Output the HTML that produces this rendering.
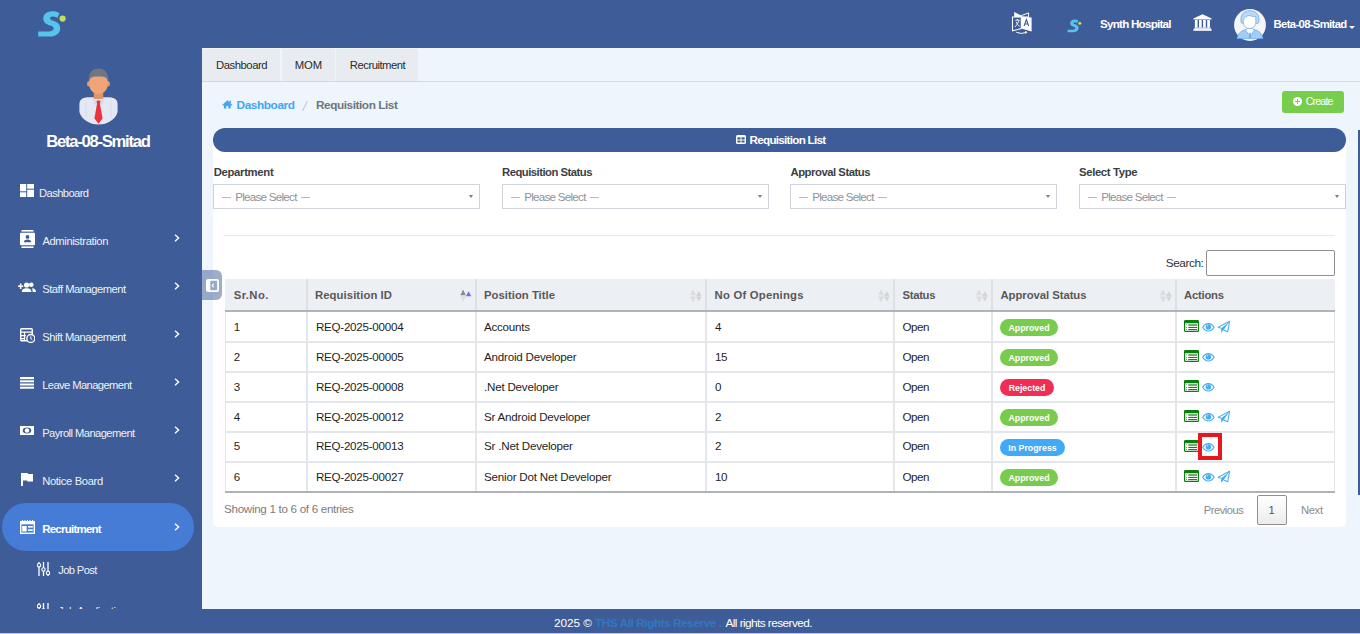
<!DOCTYPE html>
<html><head><meta charset="utf-8"><title>Requisition List</title>
<style>
*{box-sizing:border-box;margin:0;padding:0}
html,body{width:1360px;height:634px;overflow:hidden;background:#eef5fd;font-family:"Liberation Sans", sans-serif;color:#212529}
.a{position:absolute}
.t{position:absolute;white-space:nowrap;line-height:1}
</style></head>
<body>
<div class="a" style="left:0px;top:0px;width:1360px;height:48px;background:#3e5c97;"></div>
<div class="a" style="left:0px;top:48px;width:202px;height:561px;background:#3e5c97;"></div>
<div class="a" style="left:0px;top:609px;width:1360px;height:24px;background:#3e5c97;"></div>
<div class="a" style="left:0px;top:633px;width:1360px;height:1px;background:#c8c8bc;"></div>
<div class="a" style="left:202px;top:48px;width:1158px;height:561px;background:#eef5fd;"></div>
<div class="a" style="left:202px;top:48px;width:1158px;height:33px;background:#eef5fd;"></div>
<div class="a" style="left:202px;top:49px;width:78px;height:32px;background:#e8ecf0;"></div>
<div class="a" style="left:282px;top:49px;width:53px;height:32px;background:#e8ecf0;"></div>
<div class="a" style="left:336px;top:49px;width:82px;height:32px;background:#e8ecf0;"></div>
<div class="a" style="left:202px;top:81px;width:1158px;height:1px;background:#d6d9dc;"></div>
<div class="a" style="left:1282px;top:91px;width:62px;height:22px;background:#78cd4c;border-radius:3px"></div>
<div class="a" style="left:213px;top:140px;width:1133px;height:387px;background:#ffffff;border-radius:0 0 5px 5px"></div>
<div class="a" style="left:213px;top:128px;width:1133px;height:24px;background:#3e5c97;border-radius:12px"></div>
<div class="a" style="left:213px;top:184px;width:267px;height:25px;background:#fff;border:1px solid #cfd3da"></div>
<div class="a" style="left:221.8px;top:197.1px;width:9px;height:1px;background:#b5b9bf;"></div>
<div class="a" style="left:300.5px;top:197.1px;width:9.3px;height:1px;background:#b5b9bf;"></div>
<div class="a" style="left:469px;top:195px;width:0;height:0;border-left:2.5px solid transparent;border-right:2.5px solid transparent;border-top:3px solid #7a7a7a"></div>
<div class="a" style="left:502px;top:184px;width:267px;height:25px;background:#fff;border:1px solid #cfd3da"></div>
<div class="a" style="left:510.8px;top:197.1px;width:9px;height:1px;background:#b5b9bf;"></div>
<div class="a" style="left:589.5px;top:197.1px;width:9.3px;height:1px;background:#b5b9bf;"></div>
<div class="a" style="left:758px;top:195px;width:0;height:0;border-left:2.5px solid transparent;border-right:2.5px solid transparent;border-top:3px solid #7a7a7a"></div>
<div class="a" style="left:790px;top:184px;width:267px;height:25px;background:#fff;border:1px solid #cfd3da"></div>
<div class="a" style="left:798.8px;top:197.1px;width:9px;height:1px;background:#b5b9bf;"></div>
<div class="a" style="left:877.5px;top:197.1px;width:9.3px;height:1px;background:#b5b9bf;"></div>
<div class="a" style="left:1046px;top:195px;width:0;height:0;border-left:2.5px solid transparent;border-right:2.5px solid transparent;border-top:3px solid #7a7a7a"></div>
<div class="a" style="left:1079px;top:184px;width:267px;height:25px;background:#fff;border:1px solid #cfd3da"></div>
<div class="a" style="left:1087.8px;top:197.1px;width:9px;height:1px;background:#b5b9bf;"></div>
<div class="a" style="left:1166.5px;top:197.1px;width:9.3px;height:1px;background:#b5b9bf;"></div>
<div class="a" style="left:1335px;top:195px;width:0;height:0;border-left:2.5px solid transparent;border-right:2.5px solid transparent;border-top:3px solid #7a7a7a"></div>
<div class="a" style="left:224px;top:235px;width:1111px;height:1px;background:#e6e8eb;"></div>
<div class="a" style="left:1206px;top:250px;width:129px;height:26px;background:#fff;border:1px solid #8e8e8e;border-radius:2px"></div>
<div class="a" style="left:202px;top:270px;width:20px;height:30px;background:rgba(62,92,151,0.5);border-radius:0 6px 6px 0"></div>
<div class="a" style="left:206px;top:279px;line-height:0"><svg width="13" height="13" viewBox="0 0 13 13"><rect x="0" y="0" width="13" height="13" rx="2.2" fill="#fff"/><rect x="4.3" y="1.8" width="6.8" height="9.4" fill="#97a9cb"/><path d="M7.8 4.6L6.2 6.5L7.8 8.4" fill="none" stroke="#fff" stroke-width="1.1"/></svg></div>
<div class="a" style="left:225px;top:279px;width:1110px;height:32px;background:#eceff4;"></div>
<div class="a" style="left:225px;top:310px;width:1110px;height:2px;background:#b0b4ba;"></div>
<div class="a" style="left:225px;top:341px;width:1110px;height:2px;background:#e3e6ea;"></div>
<div class="a" style="left:225px;top:371px;width:1110px;height:2px;background:#e3e6ea;"></div>
<div class="a" style="left:225px;top:401px;width:1110px;height:2px;background:#e3e6ea;"></div>
<div class="a" style="left:225px;top:431px;width:1110px;height:2px;background:#e3e6ea;"></div>
<div class="a" style="left:225px;top:461px;width:1110px;height:2px;background:#e3e6ea;"></div>
<div class="a" style="left:225px;top:491px;width:1110px;height:2px;background:#aeb2b7;"></div>
<div class="a" style="left:306px;top:279px;width:2px;height:31px;background:#dde1e6;"></div>
<div class="a" style="left:306px;top:312px;width:2px;height:179px;background:#e3e6ea;"></div>
<div class="a" style="left:475px;top:279px;width:2px;height:31px;background:#dde1e6;"></div>
<div class="a" style="left:475px;top:312px;width:2px;height:179px;background:#e3e6ea;"></div>
<div class="a" style="left:705px;top:279px;width:2px;height:31px;background:#dde1e6;"></div>
<div class="a" style="left:705px;top:312px;width:2px;height:179px;background:#e3e6ea;"></div>
<div class="a" style="left:893px;top:279px;width:2px;height:31px;background:#dde1e6;"></div>
<div class="a" style="left:893px;top:312px;width:2px;height:179px;background:#e3e6ea;"></div>
<div class="a" style="left:991px;top:279px;width:2px;height:31px;background:#dde1e6;"></div>
<div class="a" style="left:991px;top:312px;width:2px;height:179px;background:#e3e6ea;"></div>
<div class="a" style="left:1175px;top:279px;width:2px;height:31px;background:#dde1e6;"></div>
<div class="a" style="left:1175px;top:312px;width:2px;height:179px;background:#e3e6ea;"></div>
<div class="a" style="left:225px;top:312px;width:1px;height:179px;background:#e3e6ea;"></div>
<div class="a" style="left:1334px;top:312px;width:1px;height:179px;background:#e3e6ea;"></div>
<div class="a" style="left:1000px;top:319px;width:58px;height:17px;background:#78cb4c;border-radius:9px"></div>
<div class="a" style="left:1000px;top:349px;width:58px;height:17px;background:#78cb4c;border-radius:9px"></div>
<div class="a" style="left:1000px;top:379px;width:54px;height:17px;background:#f02d54;border-radius:9px"></div>
<div class="a" style="left:1000px;top:409px;width:58px;height:17px;background:#78cb4c;border-radius:9px"></div>
<div class="a" style="left:1000px;top:439px;width:65px;height:17px;background:#42aaf5;border-radius:9px"></div>
<div class="a" style="left:1000px;top:469px;width:58px;height:17px;background:#78cb4c;border-radius:9px"></div>
<div class="a" style="left:459.5px;top:288.5px;line-height:0"><svg width="12" height="14" viewBox="0 0 12 14"><path d="M0.4 6.3L3.1 0.5L5.8 6.3Z" fill="#8c8c8c"/><path d="M0.4 7.3L5.8 7.3L3.1 13Z" fill="#dcdfe2"/><path d="M5.8 7.3L8.6 2.3L11.4 7.3Z" fill="#7373e0"/></svg></div>
<div class="a" style="left:690.4px;top:288.5px;line-height:0"><svg width="12" height="14" viewBox="0 0 12 14"><path d="M0 6.3L3 0.3L6 6.3Z" fill="#dadde0"/><path d="M0 7.5L6 7.5L3 13.4Z" fill="#dadde0"/><path d="M6 7L8.8 2L11.6 7Z" fill="#d5d4d4"/><path d="M6 7.4L11.6 7.4L8.8 12.5Z" fill="#d5d4d4"/></svg></div>
<div class="a" style="left:878.4px;top:288.5px;line-height:0"><svg width="12" height="14" viewBox="0 0 12 14"><path d="M0 6.3L3 0.3L6 6.3Z" fill="#dadde0"/><path d="M0 7.5L6 7.5L3 13.4Z" fill="#dadde0"/><path d="M6 7L8.8 2L11.6 7Z" fill="#d5d4d4"/><path d="M6 7.4L11.6 7.4L8.8 12.5Z" fill="#d5d4d4"/></svg></div>
<div class="a" style="left:976.4px;top:288.5px;line-height:0"><svg width="12" height="14" viewBox="0 0 12 14"><path d="M0 6.3L3 0.3L6 6.3Z" fill="#dadde0"/><path d="M0 7.5L6 7.5L3 13.4Z" fill="#dadde0"/><path d="M6 7L8.8 2L11.6 7Z" fill="#d5d4d4"/><path d="M6 7.4L11.6 7.4L8.8 12.5Z" fill="#d5d4d4"/></svg></div>
<div class="a" style="left:1160.4px;top:288.5px;line-height:0"><svg width="12" height="14" viewBox="0 0 12 14"><path d="M0 6.3L3 0.3L6 6.3Z" fill="#dadde0"/><path d="M0 7.5L6 7.5L3 13.4Z" fill="#dadde0"/><path d="M6 7L8.8 2L11.6 7Z" fill="#d5d4d4"/><path d="M6 7.4L11.6 7.4L8.8 12.5Z" fill="#d5d4d4"/></svg></div>
<div class="a" style="left:1184px;top:320px;line-height:0"><svg width="15" height="12" viewBox="0 0 15 12"><rect x="0" y="0" width="15" height="12" rx="1.2" fill="#0b7f0b"/><rect x="1.2" y="3.2" width="12.6" height="7.6" fill="#fff"/><rect x="4.3" y="3.9" width="8.7" height="2.1" fill="#72ab72"/><rect x="4.3" y="6.9" width="8.7" height="1.1" fill="#0f8a0f"/><rect x="4.3" y="9.0" width="8.7" height="1.1" fill="#0f8a0f"/><rect x="2.1" y="4.3" width="0.9" height="0.9" fill="#888"/><rect x="2.1" y="7.0" width="0.9" height="0.9" fill="#666"/><rect x="2.1" y="9.1" width="0.9" height="0.9" fill="#666"/></svg></div>
<div class="a" style="left:1202.4px;top:322.5px;line-height:0"><svg width="13" height="9" viewBox="0 0 13 9"><path d="M0.7 4.3C2.4 1.4 4.3 0.6 6.4 0.6S10.4 1.4 12.1 4.3C10.4 7.2 8.5 8 6.4 8S2.4 7.2 0.7 4.3Z" fill="none" stroke="#45abf2" stroke-width="1.1"/><circle cx="6.4" cy="3.9" r="2.7" fill="#45abf2"/><circle cx="5.6" cy="2.9" r="0.55" fill="#cfe9fc"/></svg></div>
<div class="a" style="left:1217px;top:320px;line-height:0"><svg width="14" height="14" viewBox="0 0 14 14"><path d="M0.9 7.35L12.6 1.18L10.76 11.67L6.64 10.03M0.9 7.35L4.17 8.17" fill="none" stroke="#45abf2" stroke-width="1.05" stroke-linejoin="round"/><path d="M4.17 8.17L9.1 4.47L12.6 1.18L6.64 10.03L4.17 12.7Z" fill="#45abf2"/></svg></div>
<div class="a" style="left:1184px;top:350px;line-height:0"><svg width="15" height="12" viewBox="0 0 15 12"><rect x="0" y="0" width="15" height="12" rx="1.2" fill="#0b7f0b"/><rect x="1.2" y="3.2" width="12.6" height="7.6" fill="#fff"/><rect x="4.3" y="3.9" width="8.7" height="2.1" fill="#72ab72"/><rect x="4.3" y="6.9" width="8.7" height="1.1" fill="#0f8a0f"/><rect x="4.3" y="9.0" width="8.7" height="1.1" fill="#0f8a0f"/><rect x="2.1" y="4.3" width="0.9" height="0.9" fill="#888"/><rect x="2.1" y="7.0" width="0.9" height="0.9" fill="#666"/><rect x="2.1" y="9.1" width="0.9" height="0.9" fill="#666"/></svg></div>
<div class="a" style="left:1202.4px;top:352.5px;line-height:0"><svg width="13" height="9" viewBox="0 0 13 9"><path d="M0.7 4.3C2.4 1.4 4.3 0.6 6.4 0.6S10.4 1.4 12.1 4.3C10.4 7.2 8.5 8 6.4 8S2.4 7.2 0.7 4.3Z" fill="none" stroke="#45abf2" stroke-width="1.1"/><circle cx="6.4" cy="3.9" r="2.7" fill="#45abf2"/><circle cx="5.6" cy="2.9" r="0.55" fill="#cfe9fc"/></svg></div>
<div class="a" style="left:1184px;top:380px;line-height:0"><svg width="15" height="12" viewBox="0 0 15 12"><rect x="0" y="0" width="15" height="12" rx="1.2" fill="#0b7f0b"/><rect x="1.2" y="3.2" width="12.6" height="7.6" fill="#fff"/><rect x="4.3" y="3.9" width="8.7" height="2.1" fill="#72ab72"/><rect x="4.3" y="6.9" width="8.7" height="1.1" fill="#0f8a0f"/><rect x="4.3" y="9.0" width="8.7" height="1.1" fill="#0f8a0f"/><rect x="2.1" y="4.3" width="0.9" height="0.9" fill="#888"/><rect x="2.1" y="7.0" width="0.9" height="0.9" fill="#666"/><rect x="2.1" y="9.1" width="0.9" height="0.9" fill="#666"/></svg></div>
<div class="a" style="left:1202.4px;top:382.5px;line-height:0"><svg width="13" height="9" viewBox="0 0 13 9"><path d="M0.7 4.3C2.4 1.4 4.3 0.6 6.4 0.6S10.4 1.4 12.1 4.3C10.4 7.2 8.5 8 6.4 8S2.4 7.2 0.7 4.3Z" fill="none" stroke="#45abf2" stroke-width="1.1"/><circle cx="6.4" cy="3.9" r="2.7" fill="#45abf2"/><circle cx="5.6" cy="2.9" r="0.55" fill="#cfe9fc"/></svg></div>
<div class="a" style="left:1184px;top:410px;line-height:0"><svg width="15" height="12" viewBox="0 0 15 12"><rect x="0" y="0" width="15" height="12" rx="1.2" fill="#0b7f0b"/><rect x="1.2" y="3.2" width="12.6" height="7.6" fill="#fff"/><rect x="4.3" y="3.9" width="8.7" height="2.1" fill="#72ab72"/><rect x="4.3" y="6.9" width="8.7" height="1.1" fill="#0f8a0f"/><rect x="4.3" y="9.0" width="8.7" height="1.1" fill="#0f8a0f"/><rect x="2.1" y="4.3" width="0.9" height="0.9" fill="#888"/><rect x="2.1" y="7.0" width="0.9" height="0.9" fill="#666"/><rect x="2.1" y="9.1" width="0.9" height="0.9" fill="#666"/></svg></div>
<div class="a" style="left:1202.4px;top:412.5px;line-height:0"><svg width="13" height="9" viewBox="0 0 13 9"><path d="M0.7 4.3C2.4 1.4 4.3 0.6 6.4 0.6S10.4 1.4 12.1 4.3C10.4 7.2 8.5 8 6.4 8S2.4 7.2 0.7 4.3Z" fill="none" stroke="#45abf2" stroke-width="1.1"/><circle cx="6.4" cy="3.9" r="2.7" fill="#45abf2"/><circle cx="5.6" cy="2.9" r="0.55" fill="#cfe9fc"/></svg></div>
<div class="a" style="left:1217px;top:410px;line-height:0"><svg width="14" height="14" viewBox="0 0 14 14"><path d="M0.9 7.35L12.6 1.18L10.76 11.67L6.64 10.03M0.9 7.35L4.17 8.17" fill="none" stroke="#45abf2" stroke-width="1.05" stroke-linejoin="round"/><path d="M4.17 8.17L9.1 4.47L12.6 1.18L6.64 10.03L4.17 12.7Z" fill="#45abf2"/></svg></div>
<div class="a" style="left:1184px;top:440px;line-height:0"><svg width="15" height="12" viewBox="0 0 15 12"><rect x="0" y="0" width="15" height="12" rx="1.2" fill="#0b7f0b"/><rect x="1.2" y="3.2" width="12.6" height="7.6" fill="#fff"/><rect x="4.3" y="3.9" width="8.7" height="2.1" fill="#72ab72"/><rect x="4.3" y="6.9" width="8.7" height="1.1" fill="#0f8a0f"/><rect x="4.3" y="9.0" width="8.7" height="1.1" fill="#0f8a0f"/><rect x="2.1" y="4.3" width="0.9" height="0.9" fill="#888"/><rect x="2.1" y="7.0" width="0.9" height="0.9" fill="#666"/><rect x="2.1" y="9.1" width="0.9" height="0.9" fill="#666"/></svg></div>
<div class="a" style="left:1202.4px;top:442.5px;line-height:0"><svg width="13" height="9" viewBox="0 0 13 9"><path d="M0.7 4.3C2.4 1.4 4.3 0.6 6.4 0.6S10.4 1.4 12.1 4.3C10.4 7.2 8.5 8 6.4 8S2.4 7.2 0.7 4.3Z" fill="none" stroke="#45abf2" stroke-width="1.1"/><circle cx="6.4" cy="3.9" r="2.7" fill="#45abf2"/><circle cx="5.6" cy="2.9" r="0.55" fill="#cfe9fc"/></svg></div>
<div class="a" style="left:1184px;top:470px;line-height:0"><svg width="15" height="12" viewBox="0 0 15 12"><rect x="0" y="0" width="15" height="12" rx="1.2" fill="#0b7f0b"/><rect x="1.2" y="3.2" width="12.6" height="7.6" fill="#fff"/><rect x="4.3" y="3.9" width="8.7" height="2.1" fill="#72ab72"/><rect x="4.3" y="6.9" width="8.7" height="1.1" fill="#0f8a0f"/><rect x="4.3" y="9.0" width="8.7" height="1.1" fill="#0f8a0f"/><rect x="2.1" y="4.3" width="0.9" height="0.9" fill="#888"/><rect x="2.1" y="7.0" width="0.9" height="0.9" fill="#666"/><rect x="2.1" y="9.1" width="0.9" height="0.9" fill="#666"/></svg></div>
<div class="a" style="left:1202.4px;top:472.5px;line-height:0"><svg width="13" height="9" viewBox="0 0 13 9"><path d="M0.7 4.3C2.4 1.4 4.3 0.6 6.4 0.6S10.4 1.4 12.1 4.3C10.4 7.2 8.5 8 6.4 8S2.4 7.2 0.7 4.3Z" fill="none" stroke="#45abf2" stroke-width="1.1"/><circle cx="6.4" cy="3.9" r="2.7" fill="#45abf2"/><circle cx="5.6" cy="2.9" r="0.55" fill="#cfe9fc"/></svg></div>
<div class="a" style="left:1217px;top:470px;line-height:0"><svg width="14" height="14" viewBox="0 0 14 14"><path d="M0.9 7.35L12.6 1.18L10.76 11.67L6.64 10.03M0.9 7.35L4.17 8.17" fill="none" stroke="#45abf2" stroke-width="1.05" stroke-linejoin="round"/><path d="M4.17 8.17L9.1 4.47L12.6 1.18L6.64 10.03L4.17 12.7Z" fill="#45abf2"/></svg></div>
<div class="a" style="left:1198px;top:433px;width:23.7px;height:26.8px;border:4.7px solid #e8161e"></div>
<div class="a" style="left:1257px;top:495px;width:30px;height:30px;border:1px solid #8f8f8f;border-radius:2px;background:linear-gradient(#ffffff,#ececec)"></div>
<div class="a" style="left:1358px;top:130px;width:2px;height:365px;background:#3e5c97;"></div>
<div class="a" style="left:36.6px;top:9.8px;line-height:0"><svg width="30" height="30" viewBox="0 0 30 30"><path d="M22.5 3.2C20.5 1.8 18 1.2 15.3 1.2C9.8 1.2 6.3 4.2 6.3 8.4C6.3 12.6 9.6 14.2 13.3 15.6C15.6 16.4 16.6 17.2 16.6 18.6C16.6 20.4 14.9 21.4 12.2 21.4L1.2 21.4L1.2 26.6L12.4 26.6C19 26.6 23.2 23.3 23.2 18.2C23.2 13.8 20.2 12.1 16.2 10.7C13.9 9.9 13 9.3 13 8.2C13 7.1 14 6.4 15.6 6.4C17.4 6.4 18.8 6.9 20.3 7.9Z" fill="#56c4ed"/><circle cx="25.6" cy="8.6" r="3.1" fill="#c6dc5b"/></svg></div>
<div class="a" style="left:1066.5px;top:18.5px;line-height:0;transform:scale(0.5);transform-origin:0 0"><svg width="30" height="30" viewBox="0 0 30 30"><path d="M22.5 3.2C20.5 1.8 18 1.2 15.3 1.2C9.8 1.2 6.3 4.2 6.3 8.4C6.3 12.6 9.6 14.2 13.3 15.6C15.6 16.4 16.6 17.2 16.6 18.6C16.6 20.4 14.9 21.4 12.2 21.4L1.2 21.4L1.2 26.6L12.4 26.6C19 26.6 23.2 23.3 23.2 18.2C23.2 13.8 20.2 12.1 16.2 10.7C13.9 9.9 13 9.3 13 8.2C13 7.1 14 6.4 15.6 6.4C17.4 6.4 18.8 6.9 20.3 7.9Z" fill="#56c4ed"/><circle cx="25.6" cy="8.6" r="3.1" fill="#c6dc5b"/></svg></div>
<div class="a" style="left:1008px;top:9px;line-height:0"><svg width="28" height="28" viewBox="0 0 28 28"><path d="M6.2 3.1L13.3 6.6L13.3 8L6.2 8Z" fill="#fff"/><path d="M13.3 6.6L20.6 3.9L20.6 8L13.3 8Z" fill="none" stroke="#fff" stroke-width="1"/><path d="M4.5 8L13.3 8L13.3 19.6L4.5 21.9Z" fill="#3e5c97" stroke="#fff" stroke-width="1.1"/><path d="M13.3 7.6L23.6 8.6L23.6 22.4L13.3 19.6Z" fill="#fff"/><path d="M7.3 11.2H11.6M9.4 10V11.2M11 11.5C10 14.5 8.5 16.5 6.8 18M8.2 12.8C9 15 10.3 16.5 11.8 17.4" stroke="#fff" stroke-width="0.9" fill="none"/><path d="M16.1 17L18.4 10.6L20.7 17M16.9 15H19.9" stroke="#3e5c97" stroke-width="1.1" fill="none"/><path d="M8.3 23.2Q13 25.6 18.6 23.4M17.3 22.4L18.9 23.3L17.6 24.6" stroke="#fff" stroke-width="1" fill="none"/></svg></div>
<div class="a" style="left:1192.5px;top:14px;line-height:0"><svg width="19" height="17" viewBox="0 0 19 17"><path d="M0.4 4.4L9.5 0.3L18.6 4.4V5.6H0.4Z" fill="#fff"/><rect x="1.9" y="6.0" width="2.7" height="7.6" fill="#fff"/><rect x="6.0" y="6.0" width="2.7" height="7.6" fill="#fff"/><rect x="10.1" y="6.0" width="2.7" height="7.6" fill="#fff"/><rect x="14.2" y="6.0" width="2.7" height="7.6" fill="#fff"/><rect x="1.2" y="13.6" width="16.6" height="1.2" fill="#fff"/><rect x="0.4" y="15.1" width="18.2" height="1.7" fill="#fff"/></svg></div>
<div class="a" style="left:1234px;top:9px;line-height:0"><svg width="32" height="32" viewBox="0 0 32 32"><circle cx="16" cy="16" r="15.9" fill="#f5f5f5"/><path d="M3.2 29.6C3.6 23.6 8.6 20.3 16 20.3C23.4 20.3 28.4 23.6 28.8 29.6Z" fill="#a0cdf5" stroke="#62a8e8" stroke-width="0.7"/><path d="M11.8 21.2L16 27.2L20.2 21.2L18.6 19.4H13.4Z" fill="#fff" stroke="#62a8e8" stroke-width="0.6"/><path d="M15.3 23.8H16.7L16.9 28.6L16 29.5L15.1 28.6Z" fill="#62a8e8"/><path d="M7 13C6.2 5.2 10 1.7 16 1.7C22 1.7 25.6 5.2 24.9 13C24.3 14.8 23 15 22 14H10C9 15 7.6 14.8 7 13Z" fill="#b8daf8" stroke="#62a8e8" stroke-width="0.7"/><path d="M9.3 11.2C9.8 8.6 12.5 7.2 15.2 6.3C16.8 7.3 19.3 7.6 21.8 7.4V13C21.8 17 19 19.6 15.5 19.6C12 19.6 9.3 17 9.3 13Z" fill="#fff" stroke="#62a8e8" stroke-width="0.7"/><rect x="0" y="29.7" width="32" height="2.3" fill="none"/></svg></div>
<div class="a" style="left:1349.2px;top:24px;line-height:0"><svg width="6" height="3" viewBox="0 0 6 3"><path d="M0 0H6L3 3Z" fill="#fff"/></svg></div>
<div class="a" style="left:78.5px;top:67.5px;line-height:0"><svg width="40" height="57" viewBox="0 0 40 57"><path d="M0.4 37C0.4 31.5 3 29.8 8.5 29.3L30.5 29.3C36 29.8 38.6 31.5 38.6 37L38.6 44C36.5 51.5 28.5 56.6 19.5 56.6C10.5 56.6 2.5 51.5 0.4 44Z" fill="#e3e8f4"/><path d="M7 33V50M32 33V50" stroke="#d3d9e6" stroke-width="0.8"/><rect x="14.8" y="23" width="9.4" height="8" fill="#e0956a"/><path d="M13 29.3L19.5 34.5L15.5 37Z M26 29.3L19.5 34.5L23.5 37Z" fill="#d5dbe8"/><path d="M17.6 32.5L21.4 32.5L21 36L23.6 50.5L19.5 55.8L15.4 50.5L18 36Z" fill="#e8343d"/><ellipse cx="9.9" cy="15.8" rx="1.9" ry="2.7" fill="#e6996c"/><ellipse cx="29.1" cy="15.8" rx="1.9" ry="2.7" fill="#e6996c"/><path d="M10.3 10C10.3 6 14 5 19.5 5C25 5 28.7 6 28.7 10L28.7 17C28.7 22 24 26 19.5 26C15 26 10.3 22 10.3 17Z" fill="#f0a577"/><path d="M9.8 14.5C9 4.5 13.5 0.4 19.5 0.4C25.5 0.4 30 4.5 29.2 14.5C28.4 10.5 27.5 8.6 19.5 8.6C11.5 8.6 10.6 10.5 9.8 14.5Z" fill="#6f7785"/></svg></div>
<div class="a" style="left:2px;top:503px;width:192px;height:48px;background:#467bd6;border-radius:24px"></div>
<div class="a" style="left:20.3px;top:184px;line-height:0"><svg width="14" height="13" viewBox="0 0 14 13"><rect x="0" y="0" width="6.2" height="7.3" fill="#fff"/><rect x="0" y="8.3" width="6.2" height="4.7" fill="#fff"/><rect x="7.2" y="0" width="6.8" height="4.7" fill="#fff"/><rect x="7.2" y="5.7" width="6.8" height="7.3" fill="#fff"/></svg></div>
<div class="a" style="left:19.9px;top:229.9px;line-height:0"><svg width="15" height="18" viewBox="0 0 15 18"><rect x="1.5" y="0" width="12" height="1.6" fill="#fff"/><rect x="1.5" y="16.4" width="12" height="1.6" fill="#fff"/><rect x="0" y="2.8" width="15" height="12.4" rx="1" fill="#fff"/><circle cx="7.5" cy="6.9" r="1.9" fill="#3e5c97"/><path d="M3.8 12.2C3.8 10.4 5.5 9.6 7.5 9.6S11.2 10.4 11.2 12.2Z" fill="#3e5c97"/></svg></div>
<div class="a" style="left:173.6px;top:234.10000000000002px;line-height:0"><svg width="6" height="8" viewBox="0 0 6 8"><path d="M1 0.8L4.6 4L1 7.2" fill="none" stroke="#fff" stroke-width="1.4"/></svg></div>
<div class="a" style="left:18.2px;top:281.6px;line-height:0"><svg width="18" height="10" viewBox="0 0 18 10"><path d="M0 4.3H5.3M2.65 1.6V7" stroke="#fff" stroke-width="1.5"/><circle cx="8.6" cy="3" r="2.6" fill="#fff"/><circle cx="13.3" cy="2.8" r="2.3" fill="#fff"/><path d="M3.8 10C3.8 7.3 6 6.3 8.6 6.3S13.4 7.3 13.4 10Z" fill="#fff"/><path d="M14.2 6.3C16.5 6.5 18 7.5 18 10H14.6C14.6 8.3 14.3 7.2 14.2 6.3Z" fill="#fff"/></svg></div>
<div class="a" style="left:173.6px;top:282.3px;line-height:0"><svg width="6" height="8" viewBox="0 0 6 8"><path d="M1 0.8L4.6 4L1 7.2" fill="none" stroke="#fff" stroke-width="1.4"/></svg></div>
<div class="a" style="left:20px;top:327.5px;line-height:0"><svg width="15" height="15" viewBox="0 0 15 15"><rect x="0.7" y="0.7" width="11.6" height="12" rx="1" fill="none" stroke="#fff" stroke-width="1.4"/><path d="M0.7 4.2H12.3M0.7 7.7H6M0.7 10.6H5M4.5 4.2V12.7" stroke="#fff" stroke-width="1.2"/><circle cx="10.8" cy="10.5" r="4" fill="#3e5c97" stroke="#fff" stroke-width="1.3"/><path d="M10.8 8.3V10.7L12.3 11.7" stroke="#fff" stroke-width="1" fill="none"/></svg></div>
<div class="a" style="left:173.6px;top:330.3px;line-height:0"><svg width="6" height="8" viewBox="0 0 6 8"><path d="M1 0.8L4.6 4L1 7.2" fill="none" stroke="#fff" stroke-width="1.4"/></svg></div>
<div class="a" style="left:20px;top:377px;line-height:0"><svg width="14" height="12" viewBox="0 0 14 12"><rect x="0" y="0" width="14" height="2.2" fill="#fff"/><rect x="0" y="3.3" width="14" height="2" fill="#fff"/><rect x="0" y="6.5" width="14" height="2" fill="#fff"/><rect x="0" y="9.7" width="14" height="2" fill="#fff"/></svg></div>
<div class="a" style="left:173.6px;top:378.3px;line-height:0"><svg width="6" height="8" viewBox="0 0 6 8"><path d="M1 0.8L4.6 4L1 7.2" fill="none" stroke="#fff" stroke-width="1.4"/></svg></div>
<div class="a" style="left:20px;top:426px;line-height:0"><svg width="14" height="9" viewBox="0 0 14 9"><rect x="0" y="0" width="14" height="9" fill="#fff"/><ellipse cx="7" cy="4.5" rx="4.3" ry="2.9" fill="#3e5c97"/><ellipse cx="7" cy="4.5" rx="2.2" ry="2.2" fill="#fff"/></svg></div>
<div class="a" style="left:173.6px;top:426.3px;line-height:0"><svg width="6" height="8" viewBox="0 0 6 8"><path d="M1 0.8L4.6 4L1 7.2" fill="none" stroke="#fff" stroke-width="1.4"/></svg></div>
<div class="a" style="left:21.2px;top:472.7px;line-height:0"><svg width="12" height="13" viewBox="0 0 12 13"><path d="M0 0H6.5L7 1H12V8.5H6.5L6 7.5H2V13H0Z" fill="#fff"/></svg></div>
<div class="a" style="left:173.6px;top:474.3px;line-height:0"><svg width="6" height="8" viewBox="0 0 6 8"><path d="M1 0.8L4.6 4L1 7.2" fill="none" stroke="#fff" stroke-width="1.4"/></svg></div>
<div class="a" style="left:20px;top:519.5px;line-height:0"><svg width="15" height="14" viewBox="0 0 15 14"><rect x="0.7" y="1.7" width="13.6" height="11.6" fill="none" stroke="#fff" stroke-width="1.4"/><rect x="0" y="1" width="15" height="3.3" fill="#fff"/><path d="M2.5 0V2M5 0V2M7.5 0V2M10 0V2M12.5 0V2" stroke="#fff" stroke-width="1"/><rect x="2.2" y="6" width="4.5" height="5.5" fill="#fff"/><rect x="8" y="6" width="4.8" height="1.6" fill="#fff"/><rect x="8" y="9.3" width="4.8" height="1.6" fill="#fff"/></svg></div>
<div class="a" style="left:173.5px;top:522.5px;line-height:0"><svg width="6" height="8" viewBox="0 0 6 8"><path d="M1 0.8L4.6 4L1 7.2" fill="none" stroke="#fff" stroke-width="1.4"/></svg></div>
<div class="a" style="left:37px;top:562px;line-height:0"><svg width="13" height="14" viewBox="0 0 13 14"><path d="M2 0V14M6.5 0V14M11 0V14" stroke="#fff" stroke-width="1.3"/><circle cx="2" cy="3.2" r="1.7" fill="#3e5c97" stroke="#fff" stroke-width="1.1"/><circle cx="6.5" cy="7.5" r="1.7" fill="#3e5c97" stroke="#fff" stroke-width="1.1"/><circle cx="11" cy="11" r="1.7" fill="#3e5c97" stroke="#fff" stroke-width="1.1"/></svg></div>
<div class="a" style="left:37px;top:603px;line-height:0;height:6px;overflow:hidden"><svg width="13" height="14" viewBox="0 0 13 14"><path d="M2 0V14M6.5 0V14M11 0V14" stroke="#fff" stroke-width="1.3"/><circle cx="2" cy="3.2" r="1.7" fill="#3e5c97" stroke="#fff" stroke-width="1.1"/><circle cx="6.5" cy="7.5" r="1.7" fill="#3e5c97" stroke="#fff" stroke-width="1.1"/><circle cx="11" cy="11" r="1.7" fill="#3e5c97" stroke="#fff" stroke-width="1.1"/></svg></div>
<div class="a" style="left:58px;top:603px;width:70px;height:6px;overflow:hidden"><div class="t" style="left:0;top:3.2px;font-size:11.2px;color:#eef1f7;letter-spacing:-0.4px">Job Application</div></div>
<div class="a" style="left:1293.1px;top:96.7px;width:9.3px;height:9.3px;border-radius:50%;background:#fff"></div>
<div class="a" style="left:1295.3px;top:100.8px;width:4.9px;height:1.1px;background:#78cd4c"></div>
<div class="a" style="left:1297.2px;top:98.9px;width:1.1px;height:4.9px;background:#78cd4c"></div>
<div class="a" style="left:222.3px;top:100.3px;line-height:0"><svg width="11" height="9" viewBox="0 0 11 9"><path d="M0.2 4.9L5.3 0.3L10.4 4.9L9.5 5.8L5.3 2.1L1.1 5.8Z" fill="#42a5f5"/><path d="M1.9 4.6L5.3 1.6L8.7 4.6V8.4H6.3V6H4.3V8.4H1.9Z" fill="#42a5f5"/><rect x="7.4" y="0.7" width="1.5" height="2.6" fill="#42a5f5"/></svg></div>
<div class="a" style="left:300px;top:100px;line-height:0"><svg width="10" height="12" viewBox="0 0 10 12"><path d="M7.4 1.3L2.6 10.7" stroke="#c9cdd2" stroke-width="1.3"/></svg></div>
<div class="a" style="left:735.5px;top:135px;line-height:0"><svg width="10" height="9" viewBox="0 0 10 9"><rect x="0" y="0" width="10" height="9" rx="1.6" fill="#fff"/><rect x="1.4" y="2.3" width="3.1" height="2.2" fill="#3e5c97"/><rect x="5.5" y="2.3" width="3.1" height="2.2" fill="#3e5c97"/><rect x="1.4" y="5.5" width="3.1" height="2.0" fill="#3e5c97"/><rect x="5.5" y="5.5" width="3.1" height="2.0" fill="#3e5c97"/></svg></div>
<div class="t" id="t0" style="left:216.00px;top:59.94px;font-size:11.3px;font-weight:400;color:#2b2b2b;letter-spacing:-0.458px">Dashboard</div>
<div class="t" id="t1" style="left:294.70px;top:59.94px;font-size:11.3px;font-weight:400;color:#2b2b2b;letter-spacing:-0.055px">MOM</div>
<div class="t" id="t2" style="left:349.80px;top:59.94px;font-size:11.3px;font-weight:400;color:#2b2b2b;letter-spacing:-0.501px">Recruitment</div>
<div class="t" id="t3" style="left:236.50px;top:99.72px;font-size:11.8px;font-weight:700;color:#42a5f5;letter-spacing:-0.391px">Dashboard</div>
<div class="t" id="t4" style="left:316.00px;top:99.72px;font-size:11.8px;font-weight:700;color:#6c757d;letter-spacing:-0.439px">Requisition List</div>
<div class="t" id="t5" style="left:1305.70px;top:96.34px;font-size:10.6px;font-weight:400;color:#ffffff;letter-spacing:-0.799px">Create</div>
<div class="t" id="t6" style="left:749.50px;top:134.41px;font-size:11.7px;font-weight:700;color:#ffffff;letter-spacing:-0.730px">Requisition List</div>
<div class="t" id="t7" style="left:213.70px;top:166.94px;font-size:11.3px;font-weight:700;color:#3a3f44;letter-spacing:-0.309px">Department</div>
<div class="t" id="t8" style="left:235.20px;top:191.49px;font-size:11.6px;font-weight:400;color:#8d929a;letter-spacing:-0.726px">Please Select</div>
<div class="t" id="t9" style="left:502.00px;top:166.94px;font-size:11.3px;font-weight:700;color:#3a3f44;letter-spacing:-0.510px">Requisition Status</div>
<div class="t" id="t10" style="left:524.20px;top:191.49px;font-size:11.6px;font-weight:400;color:#8d929a;letter-spacing:-0.726px">Please Select</div>
<div class="t" id="t11" style="left:790.50px;top:166.94px;font-size:11.3px;font-weight:700;color:#3a3f44;letter-spacing:-0.473px">Approval Status</div>
<div class="t" id="t12" style="left:812.20px;top:191.49px;font-size:11.6px;font-weight:400;color:#8d929a;letter-spacing:-0.726px">Please Select</div>
<div class="t" id="t13" style="left:1079.00px;top:166.94px;font-size:11.3px;font-weight:700;color:#3a3f44;letter-spacing:-0.345px">Select Type</div>
<div class="t" id="t14" style="left:1101.20px;top:191.49px;font-size:11.6px;font-weight:400;color:#8d929a;letter-spacing:-0.726px">Please Select</div>
<div class="t" id="t15" style="left:1165.80px;top:257.52px;font-size:11.8px;font-weight:400;color:#333;letter-spacing:-0.426px">Search:</div>
<div class="t" id="t16" style="left:233.80px;top:289.75px;font-size:11.3px;font-weight:700;color:#5a5858;letter-spacing:0.369px">Sr.No.</div>
<div class="t" id="t17" style="left:315.00px;top:289.75px;font-size:11.3px;font-weight:700;color:#5a5858;letter-spacing:0.081px">Requisition ID</div>
<div class="t" id="t18" style="left:484.00px;top:289.75px;font-size:11.3px;font-weight:700;color:#5a5858;letter-spacing:0.022px">Position Title</div>
<div class="t" id="t19" style="left:714.50px;top:289.75px;font-size:11.3px;font-weight:700;color:#5a5858;letter-spacing:0.232px">No Of Openings</div>
<div class="t" id="t20" style="left:902.50px;top:289.75px;font-size:11.3px;font-weight:700;color:#5a5858;letter-spacing:-0.306px">Status</div>
<div class="t" id="t21" style="left:1000.50px;top:289.75px;font-size:11.3px;font-weight:700;color:#5a5858;letter-spacing:-0.045px">Approval Status</div>
<div class="t" id="t22" style="left:1184.00px;top:289.75px;font-size:11.3px;font-weight:700;color:#5a5858;letter-spacing:-0.240px">Actions</div>
<div class="t" id="t23" style="left:233.80px;top:320.89px;font-size:11.6px;font-weight:400;color:#1e1e1e;letter-spacing:0.000px">1</div>
<div class="t" id="t24" style="left:315.90px;top:320.89px;font-size:11.6px;font-weight:400;color:#1e1e1e;letter-spacing:-0.242px">REQ-2025-00004</div>
<div class="t" id="t25" style="left:484.00px;top:320.89px;font-size:11.6px;font-weight:400;color:#1e1e1e;letter-spacing:-0.234px">Accounts</div>
<div class="t" id="t26" style="left:715.00px;top:320.89px;font-size:11.6px;font-weight:400;color:#1e1e1e;letter-spacing:-0.191px">4</div>
<div class="t" id="t27" style="left:902.50px;top:320.89px;font-size:11.6px;font-weight:400;color:#1e1e1e;letter-spacing:-0.456px">Open</div>
<div class="t" id="t28" style="left:829.0px;width:400px;text-align:center;top:323.67px;font-size:8.8px;font-weight:700;color:#fff;letter-spacing:0.000px">Approved</div>
<div class="t" id="t29" style="left:233.80px;top:350.89px;font-size:11.6px;font-weight:400;color:#1e1e1e;letter-spacing:0.000px">2</div>
<div class="t" id="t30" style="left:315.90px;top:350.89px;font-size:11.6px;font-weight:400;color:#1e1e1e;letter-spacing:-0.242px">REQ-2025-00005</div>
<div class="t" id="t31" style="left:484.00px;top:350.89px;font-size:11.6px;font-weight:400;color:#1e1e1e;letter-spacing:-0.208px">Android Developer</div>
<div class="t" id="t32" style="left:715.00px;top:350.89px;font-size:11.6px;font-weight:400;color:#1e1e1e;letter-spacing:-0.417px">15</div>
<div class="t" id="t33" style="left:902.50px;top:350.89px;font-size:11.6px;font-weight:400;color:#1e1e1e;letter-spacing:-0.456px">Open</div>
<div class="t" id="t34" style="left:829.0px;width:400px;text-align:center;top:353.67px;font-size:8.8px;font-weight:700;color:#fff;letter-spacing:0.000px">Approved</div>
<div class="t" id="t35" style="left:233.80px;top:380.89px;font-size:11.6px;font-weight:400;color:#1e1e1e;letter-spacing:0.000px">3</div>
<div class="t" id="t36" style="left:315.90px;top:380.89px;font-size:11.6px;font-weight:400;color:#1e1e1e;letter-spacing:-0.242px">REQ-2025-00008</div>
<div class="t" id="t37" style="left:484.00px;top:380.89px;font-size:11.6px;font-weight:400;color:#1e1e1e;letter-spacing:-0.206px">.Net Developer</div>
<div class="t" id="t38" style="left:715.00px;top:380.89px;font-size:11.6px;font-weight:400;color:#1e1e1e;letter-spacing:-0.191px">0</div>
<div class="t" id="t39" style="left:902.50px;top:380.89px;font-size:11.6px;font-weight:400;color:#1e1e1e;letter-spacing:-0.456px">Open</div>
<div class="t" id="t40" style="left:827.0px;width:400px;text-align:center;top:383.67px;font-size:8.8px;font-weight:700;color:#fff;letter-spacing:0.000px">Rejected</div>
<div class="t" id="t41" style="left:233.80px;top:410.89px;font-size:11.6px;font-weight:400;color:#1e1e1e;letter-spacing:0.000px">4</div>
<div class="t" id="t42" style="left:315.90px;top:410.89px;font-size:11.6px;font-weight:400;color:#1e1e1e;letter-spacing:-0.242px">REQ-2025-00012</div>
<div class="t" id="t43" style="left:484.00px;top:410.89px;font-size:11.6px;font-weight:400;color:#1e1e1e;letter-spacing:-0.201px">Sr Android Developer</div>
<div class="t" id="t44" style="left:715.00px;top:410.89px;font-size:11.6px;font-weight:400;color:#1e1e1e;letter-spacing:-0.191px">2</div>
<div class="t" id="t45" style="left:902.50px;top:410.89px;font-size:11.6px;font-weight:400;color:#1e1e1e;letter-spacing:-0.456px">Open</div>
<div class="t" id="t46" style="left:829.0px;width:400px;text-align:center;top:413.67px;font-size:8.8px;font-weight:700;color:#fff;letter-spacing:0.000px">Approved</div>
<div class="t" id="t47" style="left:233.80px;top:440.09px;font-size:11.6px;font-weight:400;color:#1e1e1e;letter-spacing:0.000px">5</div>
<div class="t" id="t48" style="left:315.90px;top:440.09px;font-size:11.6px;font-weight:400;color:#1e1e1e;letter-spacing:-0.242px">REQ-2025-00013</div>
<div class="t" id="t49" style="left:484.00px;top:440.09px;font-size:11.6px;font-weight:400;color:#1e1e1e;letter-spacing:-0.199px">Sr .Net Developer</div>
<div class="t" id="t50" style="left:715.00px;top:440.09px;font-size:11.6px;font-weight:400;color:#1e1e1e;letter-spacing:-0.191px">2</div>
<div class="t" id="t51" style="left:902.50px;top:440.09px;font-size:11.6px;font-weight:400;color:#1e1e1e;letter-spacing:-0.456px">Open</div>
<div class="t" id="t52" style="left:832.5px;width:400px;text-align:center;top:443.67px;font-size:8.8px;font-weight:700;color:#fff;letter-spacing:0.000px">In Progress</div>
<div class="t" id="t53" style="left:233.80px;top:470.89px;font-size:11.6px;font-weight:400;color:#1e1e1e;letter-spacing:0.000px">6</div>
<div class="t" id="t54" style="left:315.90px;top:470.89px;font-size:11.6px;font-weight:400;color:#1e1e1e;letter-spacing:-0.242px">REQ-2025-00027</div>
<div class="t" id="t55" style="left:484.00px;top:470.89px;font-size:11.6px;font-weight:400;color:#1e1e1e;letter-spacing:-0.200px">Senior Dot Net Developer</div>
<div class="t" id="t56" style="left:715.00px;top:470.89px;font-size:11.6px;font-weight:400;color:#1e1e1e;letter-spacing:-0.417px">10</div>
<div class="t" id="t57" style="left:902.50px;top:470.89px;font-size:11.6px;font-weight:400;color:#1e1e1e;letter-spacing:-0.456px">Open</div>
<div class="t" id="t58" style="left:829.0px;width:400px;text-align:center;top:473.67px;font-size:8.8px;font-weight:700;color:#fff;letter-spacing:0.000px">Approved</div>
<div class="t" id="t59" style="left:224.10px;top:503.49px;font-size:11.6px;font-weight:400;color:#7c7c7c;letter-spacing:-0.292px">Showing 1 to 6 of 6 entries</div>
<div class="t" id="t60" style="left:1203.80px;top:504.83px;font-size:11.2px;font-weight:400;color:#8a8a8a;letter-spacing:-0.504px">Previous</div>
<div class="t" id="t61" style="left:1071.5px;width:400px;text-align:center;top:504.83px;font-size:11.2px;font-weight:400;color:#555;letter-spacing:0.000px">1</div>
<div class="t" id="t62" style="left:1301.00px;top:504.83px;font-size:11.2px;font-weight:400;color:#8a8a8a;letter-spacing:-0.339px">Next</div>
<div class="t" id="t63" style="left:553.90px;top:617.62px;font-size:11.8px;font-weight:400;color:#ffffff;letter-spacing:-0.044px">2025 ©</div>
<div class="t" id="t64" style="left:595.00px;top:617.62px;font-size:11.8px;font-weight:700;color:#3078c2;letter-spacing:-0.445px">THS All Rights Reserve .</div>
<div class="t" id="t65" style="left:725.50px;top:617.62px;font-size:11.8px;font-weight:400;color:#ffffff;letter-spacing:-0.562px">All rights reserved.</div>
<div class="t" id="t66" style="left:1100.00px;top:18.29px;font-size:11.6px;font-weight:700;color:#ffffff;letter-spacing:-0.744px">Synth Hospital</div>
<div class="t" id="t67" style="left:1273.60px;top:18.55px;font-size:11.3px;font-weight:700;color:#ffffff;letter-spacing:-0.665px">Beta-08-Smitad</div>
<div class="t" id="t68" style="left:46.20px;top:134.14px;font-size:16.6px;font-weight:700;color:#ffffff;letter-spacing:-1.247px">Beta-08-Smitad</div>
<div class="t" id="t69" style="left:39.10px;top:187.93px;font-size:11.2px;font-weight:400;color:#eef1f7;letter-spacing:-0.592px">Dashboard</div>
<div class="t" id="t70" style="left:42.40px;top:235.73px;font-size:11.2px;font-weight:400;color:#eef1f7;letter-spacing:-0.376px">Administration</div>
<div class="t" id="t71" style="left:42.20px;top:283.93px;font-size:11.2px;font-weight:400;color:#eef1f7;letter-spacing:-0.481px">Staff Management</div>
<div class="t" id="t72" style="left:42.20px;top:331.93px;font-size:11.2px;font-weight:400;color:#eef1f7;letter-spacing:-0.453px">Shift Management</div>
<div class="t" id="t73" style="left:42.20px;top:379.93px;font-size:11.2px;font-weight:400;color:#eef1f7;letter-spacing:-0.593px">Leave Management</div>
<div class="t" id="t74" style="left:42.20px;top:427.93px;font-size:11.2px;font-weight:400;color:#eef1f7;letter-spacing:-0.565px">Payroll Management</div>
<div class="t" id="t75" style="left:42.20px;top:475.93px;font-size:11.2px;font-weight:400;color:#eef1f7;letter-spacing:-0.335px">Notice Board</div>
<div class="t" id="t76" style="left:42.20px;top:523.58px;font-size:11.5px;font-weight:700;color:#ffffff;letter-spacing:-0.761px">Recruitment</div>
<div class="t" id="t77" style="left:58.30px;top:564.83px;font-size:11.2px;font-weight:400;color:#eef1f7;letter-spacing:-0.650px">Job Post</div>
</body></html>
